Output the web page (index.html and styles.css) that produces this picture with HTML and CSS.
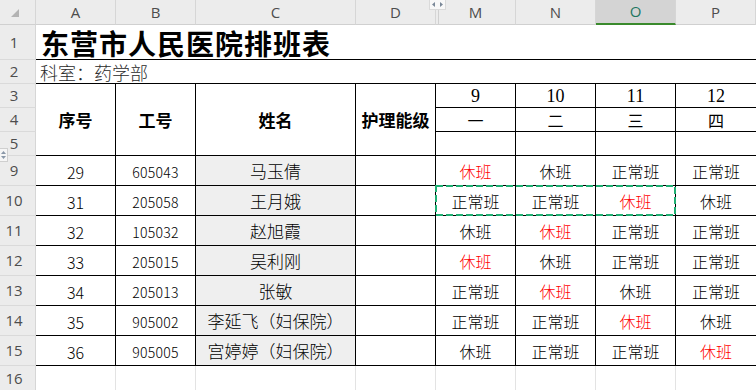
FILE: index.html
```html
<!DOCTYPE html>
<html lang="zh">
<head>
<meta charset="utf-8">
<title>东营市人民医院排班表</title>
<link rel="stylesheet" href="styles.css">
</head>
<body>
<div class="sheet">
  <div class="corner"><svg width="8" height="8" viewBox="0 0 8 8"><polygon points="8,0 8,8 0,8" fill="#b3b3b3"/></svg></div>
  <div class="ch">A</div>
  <div class="ch">B</div>
  <div class="ch">C</div>
  <div class="ch">D</div>
  <div class="ch ch-m">M</div>
  <div class="ch">N</div>
  <div class="ch sel">O</div>
  <div class="ch">P</div>

  <div class="rh">1</div>
  <div class="title">东营市人民医院排班表</div>

  <div class="rh">2</div>
  <div class="dept">科室：药学部</div>

  <div class="rh">3</div>
  <div class="hd">序号</div>
  <div class="hd">工号</div>
  <div class="hd">姓名</div>
  <div class="hd">护理能级</div>
  <div class="c date">9</div>
  <div class="c date">10</div>
  <div class="c date">11</div>
  <div class="c date last">12</div>

  <div class="rh">4</div>
  <div class="c wk">一</div>
  <div class="c wk">二</div>
  <div class="c wk">三</div>
  <div class="c wk last">四</div>

  <div class="rh">5</div>
  <div class="c"></div>
  <div class="c"></div>
  <div class="c"></div>
  <div class="c last"></div>

  <div class="rh">9</div>
  <div class="c num">29</div><div class="c id">605043</div><div class="c name">马玉倩</div><div class="c"></div>
  <div class="c sh red">休班</div><div class="c sh">休班</div><div class="c sh">正常班</div><div class="c sh last">正常班</div>

  <div class="rh">10</div>
  <div class="c num">31</div><div class="c id">205058</div><div class="c name">王月娥</div><div class="c"></div>
  <div class="c sh">正常班</div><div class="c sh">正常班</div><div class="c sh red">休班</div><div class="c sh last">休班</div>

  <div class="rh">11</div>
  <div class="c num">32</div><div class="c id">105032</div><div class="c name">赵旭霞</div><div class="c"></div>
  <div class="c sh">休班</div><div class="c sh red">休班</div><div class="c sh">正常班</div><div class="c sh last">正常班</div>

  <div class="rh">12</div>
  <div class="c num">33</div><div class="c id">205015</div><div class="c name">吴利刚</div><div class="c"></div>
  <div class="c sh red">休班</div><div class="c sh">休班</div><div class="c sh">正常班</div><div class="c sh last">正常班</div>

  <div class="rh">13</div>
  <div class="c num">34</div><div class="c id">205013</div><div class="c name">张敏</div><div class="c"></div>
  <div class="c sh">正常班</div><div class="c sh red">休班</div><div class="c sh">休班</div><div class="c sh last">正常班</div>

  <div class="rh">14</div>
  <div class="c num">35</div><div class="c id">905002</div><div class="c name">李延飞（妇保院）</div><div class="c"></div>
  <div class="c sh">正常班</div><div class="c sh">正常班</div><div class="c sh red">休班</div><div class="c sh last">休班</div>

  <div class="rh">15</div>
  <div class="c num">36</div><div class="c id">905005</div><div class="c name">宫婷婷（妇保院）</div><div class="c"></div>
  <div class="c sh">休班</div><div class="c sh">正常班</div><div class="c sh">正常班</div><div class="c sh last red">休班</div>

  <div class="rh rh-last">16</div>
  <div class="e"></div><div class="e"></div><div class="e"></div><div class="e"></div>
  <div class="e"></div><div class="e"></div><div class="e"></div><div class="e last"></div>

  <svg class="marquee" width="241" height="31" viewBox="0 0 241 31"><rect x="1" y="1" width="239" height="29" fill="none" stroke="#1fae72" stroke-width="2" stroke-dasharray="7 3"/></svg>
  <svg class="unhide" width="17" height="10" viewBox="0 0 17 10"><rect x="0.5" y="-1" width="16" height="10.5" fill="#f8f8f8" stroke="#dadada"/><polygon points="6,2 6,7 3,4.5" fill="#7a8898"/><polygon points="11,2 11,7 14,4.5" fill="#7a8898"/></svg>
  <svg class="spin" width="8" height="14" viewBox="0 0 8 14"><rect x="-1" y="0.5" width="8.5" height="13" fill="#f6f6f6" stroke="#cfcfcf"/><polygon points="1,6 6,6 3.5,3" fill="#8a98a8"/><polygon points="1,8 6,8 3.5,11" fill="#8a98a8"/></svg>
</div>
</body>
</html>
```

FILE: styles.css
```css
html, body {
  margin: 0;
  padding: 0;
  background: #ffffff;
  overflow: hidden;
}

.sheet {
  position: relative;
  width: 756px;
  height: 390px;
  display: grid;
  grid-template-columns: 36px 80px 80px 160px 80px 80px 80px 80px 80px;
  grid-template-rows: 25px 35px 24px 24px 24px 24px repeat(7, 30px) 24px;
  font-family: "Noto Sans CJK SC", sans-serif;
  color: #000;
}

.sheet > div {
  box-sizing: border-box;
  display: flex;
  align-items: center;
  justify-content: center;
  white-space: nowrap;
  line-height: 1;
}

.corner {
  background: #ececec;
  border-right: 1px solid #d6d6d6;
  border-bottom: 1px solid #d0d0d0;
  justify-content: flex-start !important;
  padding-left: 11px;
  padding-top: 2px;
}

.ch {
  background: #ececec;
  border-right: 1px solid #d6d6d6;
  border-bottom: 1px solid #d0d0d0;
  font-family: "Open Sans", "Noto Sans", sans-serif;
  font-size: 15px;
  color: #4d4d4d;
}

.ch-m {
  background: linear-gradient(to right, #ececec 2px, #d0d0d0 2px, #d0d0d0 3px, #ececec 3px);
}

.ch.sel {
  background: #d4d4d4;
  border-bottom: 2px solid #3a8a2c;
  color: #1e7660;
}

.rh {
  background: #ececec;
  border-right: 1px solid #d6d6d6;
  border-bottom: 1px solid #dadada;
  font-family: "Open Sans", "Noto Sans", sans-serif;
  font-size: 15px;
  color: #4d4d4d;
  padding-right: 7px;
}

.rh-last {
  border-bottom: none;
}

.title {
  grid-column: span 8;
  justify-content: flex-start !important;
  padding-left: 5px;
  padding-top: 1px;
  font-size: 28px;
  font-weight: 700;
  letter-spacing: 1px;
  border-bottom: 1px solid #000;
}

.dept {
  grid-column: span 8;
  justify-content: flex-start !important;
  align-items: flex-end !important;
  padding-left: 4px;
  padding-bottom: 2px;
  font-size: 18px;
  font-weight: 300;
  color: #2a2a2a;
  border-bottom: 1px solid #000;
}

.hd {
  grid-row: span 3;
  font-size: 17px;
  font-weight: 700;
  border-right: 1px solid #000;
  border-bottom: 1px solid #000;
}

.c {
  border-right: 1px solid #000;
  border-bottom: 1px solid #000;
}

.c.last {
  border-right: none;
}

.date {
  font-family: "Liberation Serif", serif;
  font-size: 18px;
  padding-top: 1px;
}

.wk {
  font-size: 16px;
}

.num {
  font-size: 16px;
  font-weight: 300;
  padding-top: 3px;
}

.id {
  font-size: 14px;
  font-weight: 300;
  letter-spacing: 0.3px;
  padding-top: 3px;
}

.name {
  background: #efefef;
  font-size: 17px;
  font-weight: 300;
}

.sh {
  font-size: 16px;
  font-weight: 300;
}

.red {
  color: #ff0000;
}

.e {
  border-right: 1px solid #e3e3e3;
}

.e.last {
  border-right: none;
}

.marquee {
  position: absolute;
  left: 435px;
  top: 185px;
}

.unhide {
  position: absolute;
  left: 429px;
  top: 0;
}

.spin {
  position: absolute;
  left: 0;
  top: 148px;
}
```
